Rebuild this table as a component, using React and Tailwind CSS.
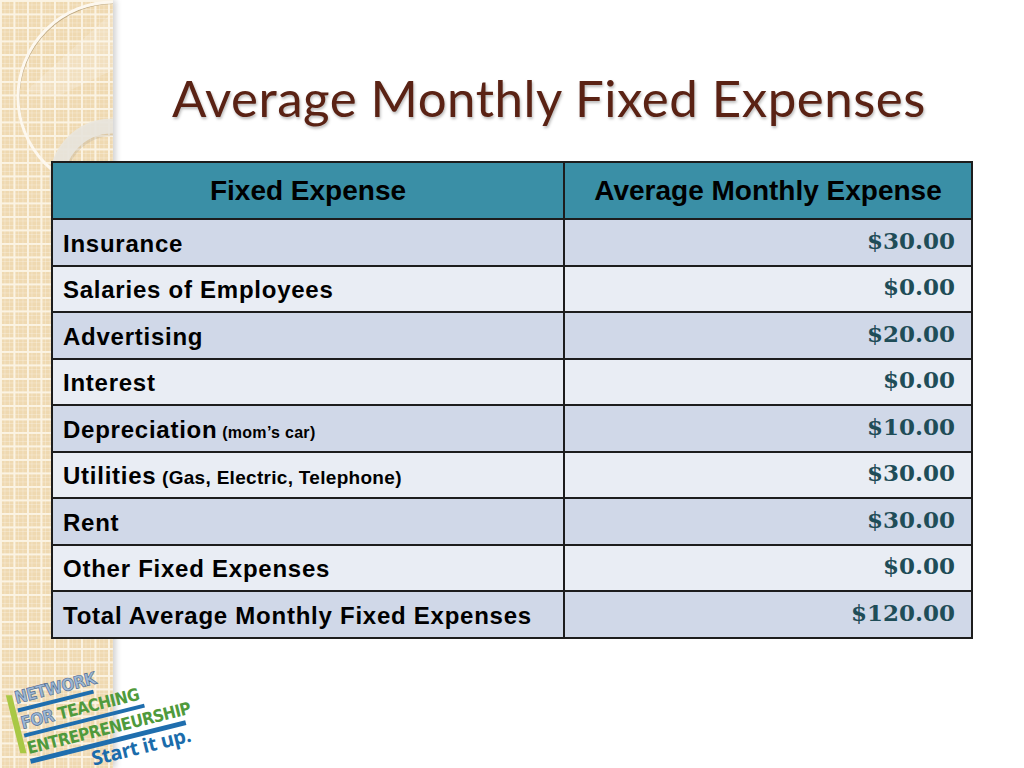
import React from "react";

const rows = [
  { label: "Insurance", value: "$30.00" },
  { label: "Salaries of Employees", value: "$0.00" },
  { label: "Advertising", value: "$20.00" },
  { label: "Interest", value: "$0.00" },
  { label: "Depreciation", note: "(mom’s car)", noteSize: "text-[16px]", value: "$10.00" },
  { label: "Utilities", note: "(Gas, Electric, Telephone)", noteSize: "text-[19px]", value: "$30.00" },
  { label: "Rent", value: "$30.00" },
  { label: "Other Fixed Expenses", value: "$0.00" },
  { label: "Total Average Monthly Fixed Expenses", value: "$120.00" },
];

const Strip = () => (
  <div className="absolute left-0 top-0 h-full w-[113px] overflow-hidden bg-[#efd9b1] bg-[linear-gradient(90deg,#fbf3e3_2px,transparent_2px),linear-gradient(#fbf3e3_2px,transparent_2px),linear-gradient(90deg,rgba(255,255,255,0.25)_1px,transparent_1px),linear-gradient(rgba(255,255,255,0.25)_1px,transparent_1px)] bg-size-[13.5px_13.5px,13.5px_13.5px,4.5px_4.5px,4.5px_4.5px] shadow-[3px_0_6px_rgba(0,0,0,0.18)]">
    <svg width="113" height="768" className="absolute left-0 top-0">
      <path d="M113 12 L113 70 L60 95 L25 92 Z" fill="#ffffff" opacity="0.2" />
      <circle cx="113" cy="97" r="95" fill="none" stroke="#a8936c" strokeWidth="1.2" opacity="0.7" transform="translate(1 1.5)" />
      <circle cx="113" cy="97" r="95" fill="none" stroke="#fdf8ef" strokeWidth="3" />
      <circle cx="112" cy="181" r="55" fill="none" stroke="#a89c88" strokeWidth="16" opacity="0.25" transform="translate(1 2)" />
      <circle cx="112" cy="181" r="55" fill="none" stroke="#e9e5de" strokeWidth="15" opacity="0.9" />
    </svg>
  </div>
);

const Logo = () => (
  <div className="absolute left-[5px] top-[692px] origin-top-left -rotate-[14deg] font-['DejaVu_Sans_Condensed','DejaVu_Sans',sans-serif] font-stretch-condensed font-bold leading-none">
    <div className="flex">
      <div className="mt-[4px] w-[6px] h-[60px] bg-[#a9c845] skew-y-[14deg]" />
      <div className="ml-[2px] flex flex-col">
        <div className="text-[17px] text-[#9db8d6] [-webkit-text-stroke:0.6px_#4a6890] tracking-[-0.6px]">NETWORK</div>
        <div className="mt-[2px] h-[4px] w-[78px] bg-[#1f6eae]" />
        <div className="mt-[3px] text-[17px] tracking-[-0.6px]">
          <span className="text-[#9db8d6] [-webkit-text-stroke:0.6px_#4a6890]">FOR </span>
          <span className="text-[#4f9a3c]">TEACHING</span>
        </div>
        <div className="mt-[2px] h-[4px] w-[124px] bg-[#1f6eae]" />
        <div className="mt-[3px] text-[17px] text-[#4f9a3c] tracking-[-0.6px]">ENTREPRENEURSHIP</div>
        <div className="mt-[2px] h-[5px] w-[160px] bg-[#1f6eae]" />
        <div className="ml-[60px] font-['Open_Sans',sans-serif] font-stretch-normal font-bold text-[20px] text-[#1b6cab] tracking-[-0.4px]">Start it up.</div>
      </div>
    </div>
  </div>
);

export default function App() {
  return (
    <div className="relative w-[1024px] h-[768px] overflow-hidden bg-white">
      <Strip />
      <Logo />
      <div className="relative flex flex-col">
        <div className="h-[161px] pl-[172px] pt-[72px]">
          <h1 className="font-['Lato',sans-serif] text-[51px] leading-none text-[#5a2214] tracking-[0.5px] [text-shadow:1px_2px_3px_rgba(0,0,0,0.28)]">
            Average Monthly Fixed Expenses
          </h1>
        </div>
        <table className="ml-[51px] w-[922px] border-collapse font-['Liberation_Sans',Arial,sans-serif] font-bold text-black">
          <thead>
            <tr className="h-[57px] bg-[#3a8fa6]">
              <th className="w-[512px] border-2 border-[#1d1d1d] text-center text-[28px] font-bold">Fixed Expense</th>
              <th className="border-2 border-[#1d1d1d] text-center text-[28px] font-bold">Average Monthly Expense</th>
            </tr>
          </thead>
          <tbody>
            {rows.map((r, i) => (
              <tr key={r.label} className={`h-[46.5px] ${i % 2 === 0 ? "bg-[#d0d8e8]" : "bg-[#e9edf4]"}`}>
                <td className="border-2 border-[#1d1d1d] pl-[10px] pt-[3px] text-[24px] tracking-[0.75px] leading-none">
                  {r.label}
                  {r.note && <span className={`${r.noteSize} tracking-[0.3px]`}> {r.note}</span>}
                </td>
                <td className="border-2 border-[#1d1d1d] pr-[16px] pb-[4px] text-right font-['DejaVu_Serif',serif] text-[23px] leading-none text-[#1f4d58]">
                  {r.value}
                </td>
              </tr>
            ))}
          </tbody>
        </table>
      </div>
    </div>
  );
}
